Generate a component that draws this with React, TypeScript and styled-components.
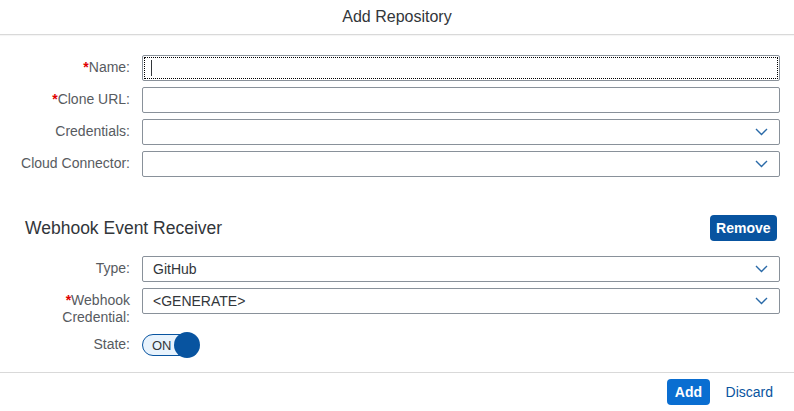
import React from "react";
import styled, { createGlobalStyle } from "styled-components";

const Global = createGlobalStyle`
  html, body { margin: 0; padding: 0; background: #ffffff; }
  body { font-family: "Liberation Sans", Arial, sans-serif; color: #32363a; }
  * { box-sizing: border-box; }
`;

const Dialog = styled.div`
  width: 794px;
  height: 411px;
  display: flex;
  flex-direction: column;
  background: #fff;
`;

const Header = styled.header`
  height: 35px;
  display: flex;
  align-items: center;
  justify-content: center;
  border-bottom: 1px solid #d9d9d9;
  box-shadow: 0 1px 1px rgba(0, 0, 0, 0.04);
  font-size: 16px;
  color: #32363a;
  padding-bottom: 1px;
`;

const Content = styled.div`
  flex: 1;
  padding: 20px 14px 0 0;
`;

const Form = styled.div`
  display: grid;
  grid-template-columns: 130px 1fr;
  column-gap: 12px;
  row-gap: 6px;
`;

const Label = styled.label<{ $required?: boolean }>`
  text-align: right;
  font-size: 14px;
  line-height: 17px;
  padding: 4px 0 0 14px;
  color: #575b5f;
  &::before {
    content: ${(p) => (p.$required ? '"*"' : "none")};
    color: #e00000;
    font-weight: bold;
  }
`;

const Field = styled.div<{ $focused?: boolean }>`
  position: relative;
  height: 26px;
  border: 1px solid #89919a;
  border-radius: 2px;
  background: #fff;
  display: flex;
  align-items: center;
  padding: 0 10px;
  font-size: 14px;
  color: #32363a;
  &::after {
    content: "";
    display: ${(p) => (p.$focused ? "block" : "none")};
    position: absolute;
    inset: 1px;
    border: 1px dotted #000;
    pointer-events: none;
  }
`;

const Caret = styled.span`
  width: 1px;
  height: 16px;
  background: #32363a;
  margin-left: -2px;
`;

const Value = styled.span`
  flex: 1;
`;

const Chevron = styled.svg`
  width: 13px;
  height: 8px;
  margin-right: 1px;
`;

const SectionHead = styled.div`
  display: flex;
  align-items: center;
  justify-content: space-between;
  margin: 38px 3px 15px 25px;
  height: 26px;
`;

const SectionTitle = styled.h2`
  margin: 0;
  font-size: 17.5px;
  font-weight: normal;
  color: #32363a;
`;

const Button = styled.button<{ $tone: "dark" | "bright" }>`
  height: 26px;
  border: none;
  border-radius: 4px;
  padding: 0 ${(p) => (p.$tone === "dark" ? "6.5px" : "7.5px")};
  font-family: inherit;
  font-size: 14px;
  font-weight: bold;
  color: #fff;
  background: ${(p) => (p.$tone === "dark" ? "#0854a0" : "#0a6ed1")};
`;

const SwitchWrap = styled.div`
  height: 26px;
  display: flex;
  align-items: center;
`;

const Track = styled.div`
  position: relative;
  width: 52px;
  height: 22px;
  border: 1px solid #0854a0;
  border-radius: 11px;
  background: #e8f3fd;
  display: flex;
  align-items: center;
  padding-left: 9px;
  font-size: 13px;
  color: #32363a;
`;

const Knob = styled.span`
  position: absolute;
  right: -7px;
  top: 50%;
  width: 26px;
  height: 26px;
  margin-top: -13px;
  border-radius: 50%;
  background: #0854a0;
`;

const Footer = styled.footer`
  height: 39px;
  border-top: 1px solid #d9d9d9;
  display: flex;
  align-items: center;
  justify-content: flex-end;
  gap: 16px;
  padding: 0 21px 0 0;
`;

const LinkButton = styled.button`
  border: none;
  background: none;
  padding: 0;
  font-family: inherit;
  font-size: 14px;
  color: #0854a0;
`;

const Down = () => (
  <Chevron viewBox="0 0 13 8">
    <path d="M1 1 L6.5 6.5 L12 1" fill="none" stroke="#2a6aa8" strokeWidth="1.4" />
  </Chevron>
);

export default function App() {
  return (
    <>
      <Global />
      <Dialog>
        <Header>Add Repository</Header>
        <Content>
          <Form>
            <Label $required>Name:</Label>
            <Field $focused><Caret /></Field>
            <Label $required>Clone URL:</Label>
            <Field />
            <Label>Credentials:</Label>
            <Field><Value /><Down /></Field>
            <Label>Cloud Connector:</Label>
            <Field><Value /><Down /></Field>
          </Form>
          <SectionHead>
            <SectionTitle>Webhook Event Receiver</SectionTitle>
            <Button $tone="dark">Remove</Button>
          </SectionHead>
          <Form>
            <Label>Type:</Label>
            <Field><Value>GitHub</Value><Down /></Field>
            <Label $required>Webhook Credential:</Label>
            <Field><Value>&lt;GENERATE&gt;</Value><Down /></Field>
            <Label>State:</Label>
            <SwitchWrap>
              <Track>ON<Knob /></Track>
            </SwitchWrap>
          </Form>
        </Content>
        <Footer>
          <Button $tone="bright">Add</Button>
          <LinkButton>Discard</LinkButton>
        </Footer>
      </Dialog>
    </>
  );
}
